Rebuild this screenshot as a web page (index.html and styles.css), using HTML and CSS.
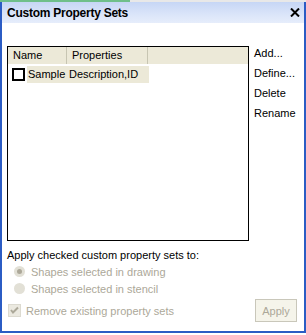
FILE: index.html
```html
<!DOCTYPE html>
<html lang="en">
<head>
  <meta charset="UTF-8" />
  <title>Custom Property Sets</title>
  <link rel="stylesheet" href="styles.css">
</head>
<body>
  <div class="topstrip"><span class="strip-green"></span></div>
  <div class="window">
    <!-- TITLE -->
    <div class="titlebar">
      <span class="title">Custom Property Sets</span>
      <svg class="close" width="10" height="9" viewBox="0 0 10 9">
        <path d="M1 0.5 L9 8.5 M9 0.5 L1 8.5" stroke="#000" stroke-width="2" fill="none" />
      </svg>
    </div>

    <div class="content">
      <div class="main-row">
        <!-- LIST -->
        <div class="listbox">
          <div class="list-head">
            <div class="col col-name">Name</div>
            <div class="col col-props">Properties</div>
            <div class="col col-rest"></div>
          </div>
          <div class="list-row">
            <span class="check-box"></span>
            <span class="cell cell-name">Sample</span>
            <span class="cell cell-props">Description,ID</span>
          </div>
        </div>

        <!-- BUTTONS -->
        <div class="side-buttons">
          <div class="link-btn">Add...</div>
          <div class="link-btn">Define...</div>
          <div class="link-btn">Delete</div>
          <div class="link-btn">Rename</div>
        </div>
      </div>

      <div class="apply-label">Apply checked custom property sets to:</div>
      <div class="option disabled first"><span class="radio checked"></span>Shapes selected in drawing</div>
      <div class="option disabled"><span class="radio"></span>Shapes selected in stencil</div>

      <div class="bottom-row">
        <div class="option disabled remove">
          <svg class="check-dis" width="13" height="13" viewBox="0 0 13 13">
            <rect width="13" height="13" fill="#dcdad0" />
            <rect x="1" y="1" width="11" height="11" fill="#ebe9e0" />
            <path d="M3 6 L5 8.5 L10 3.5" stroke="#aca899" stroke-width="2" fill="none" />
          </svg>
          Remove existing property sets
        </div>
        <div class="apply-btn">Apply</div>
      </div>
    </div>
  </div>
</body>
</html>
```

FILE: styles.css
```css
body {
  margin: 0;
  background: #fff;
  font-family: "Liberation Sans", Arial, sans-serif;
  font-size: 11px;
  color: #000;
  width: 306px;
  height: 335px;
  overflow: hidden;
}

.topstrip {
  height: 2px;
  background: #e8e8e8;
  display: flex;
}

.strip-green {
  width: 130px;
  background: #6fbf8a;
}

.window {
  border: 2px solid #2b5cc4;
  border-top: none;
  height: 331px;
  box-sizing: border-box;
  display: flex;
  flex-direction: column;
}

.titlebar {
  height: 21px;
  background: linear-gradient(#c6d6f5, #dbe5f9 60%, #e6edfb);
  display: flex;
  align-items: center;
  justify-content: space-between;
  padding: 0 4px 0 5px;
}

.title {
  font-weight: bold;
  font-size: 12px;
  letter-spacing: -0.25px;
}

.close {
  display: block;
}

.content {
  flex: 1;
  padding: 23px 0 0 5px;
  display: flex;
  flex-direction: column;
}

.main-row {
  display: flex;
  gap: 5px;
}

.listbox {
  width: 240px;
  height: 193px;
  border: 1px solid #000;
  background: #fff;
}

.list-head {
  display: flex;
  height: 17px;
  background: #ece9d8;
  border-bottom: 1px solid #fff;
}

.col {
  padding: 2px 0 0 5px;
  border-right: 1px solid #c7c5b2;
  box-sizing: border-box;
}

.col-name { width: 59px; }
.col-props { width: 81px; }
.col-rest { flex: 1; border-right: none; }

.list-row {
  display: flex;
  align-items: center;
  height: 17px;
  margin-top: 1px;
}

.check-box {
  width: 9px;
  height: 9px;
  border: 2px solid #000;
  margin: 0 2px 0 4px;
  background: #fff;
}

.cell {
  background: #ece9d8;
  height: 17px;
  line-height: 17px;
}

.cell-name { width: 40px; padding-left: 1px; }
.cell-props { width: 80px; padding-left: 1px; }

.side-buttons {
  display: flex;
  flex-direction: column;
  gap: 7px;
  padding-top: 1px;
}

.link-btn {
  height: 13px;
}

.apply-label {
  margin-top: 8px;
}

.option {
  display: flex;
  align-items: center;
  height: 17px;
}

.option.first {
  margin-top: 2px;
}

.disabled {
  color: #aca899;
}

.radio {
  width: 11px;
  height: 11px;
  border-radius: 50%;
  background: #e2e0d6;
  margin: 0 6px 0 7px;
  position: relative;
}

.radio.checked::after {
  content: "";
  position: absolute;
  left: 3px;
  top: 3px;
  width: 5px;
  height: 5px;
  border-radius: 50%;
  background: #aca899;
}

.bottom-row {
  display: flex;
  align-items: flex-end;
  justify-content: space-between;
  padding-right: 7px;
}

.remove {
  margin-bottom: 3px;
}

.check-dis {
  margin: 0 5px 0 1px;
}

.apply-btn {
  width: 42px;
  height: 23px;
  border: 1px solid #c9c7ba;
  background: #f5f4ea;
  color: #aca899;
  box-sizing: border-box;
  display: flex;
  align-items: center;
  justify-content: center;
  margin-top: 2px;
}
```
